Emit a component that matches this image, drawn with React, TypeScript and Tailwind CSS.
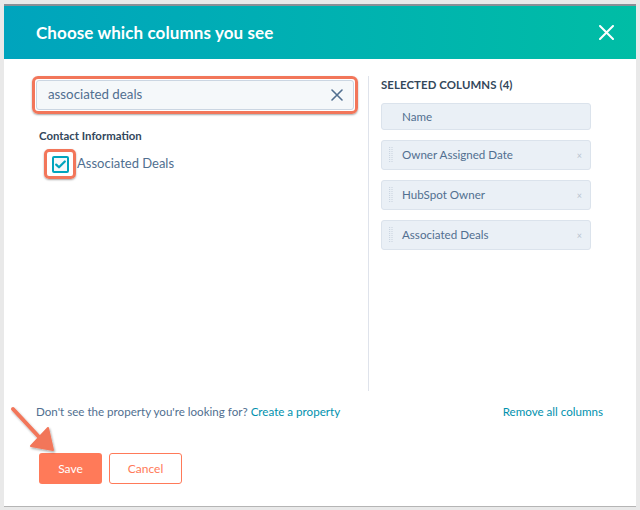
import React from 'react';

const columns = [
  { name: 'Name', locked: true },
  { name: 'Owner Assigned Date', locked: false },
  { name: 'HubSpot Owner', locked: false },
  { name: 'Associated Deals', locked: false },
];

const DragHandle: React.FC = () => (
  <svg width="4" height="18" viewBox="0 0 4 18" className="shrink-0">
    {[0, 1, 2, 3, 4, 5, 6, 7].map((i) => (
      <g key={i}>
        <rect x="0" y={1 + i * 2} width="1.2" height="1" fill="#cbd6e2" />
        <rect x="2.4" y={1 + i * 2} width="1.2" height="1" fill="#cbd6e2" />
      </g>
    ))}
  </svg>
);

const App: React.FC = () => {
  return (
    <div
      className="relative w-[640px] h-[510px] bg-[#e9e9e9] px-[4px] pt-[4px] pb-[3px]"
      style={{ fontFamily: 'Lato, "Open Sans", sans-serif' }}
    >
      <div className="flex flex-col h-full bg-white border-t-2 border-[#8a8f96] border-b border-b-[#b5b5b5]">
        {/* Header */}
        <div className="flex items-center justify-between h-[53px] pl-[32px] pr-[22px] bg-gradient-to-r from-[#00a4bd] to-[#00bda5]">
          <h1 className="text-white text-[17px] font-bold tracking-[0.1px]">Choose which columns you see</h1>
          <svg width="15" height="15" viewBox="0 0 15 15">
            <path d="M1 1 L14 14 M14 1 L1 14" stroke="#ffffff" strokeWidth="2" strokeLinecap="round" />
          </svg>
        </div>

        {/* Body */}
        <div className="flex flex-1 pt-[17px]">
          {/* Left column */}
          <div className="w-[364px] pl-[28px] pr-[10px]">
            <div className="w-[326px] rounded-[6px] border-[3px] border-[#f2765a] p-[1px] shadow-[0_1px_2px_rgba(0,0,0,0.35)]">
              <div className="flex items-center justify-between h-[30px] rounded-[3px] border border-[#cbd6e2] bg-[#f5f8fa] pl-[11px] pr-[10px]">
                <span className="text-[13.3px] text-[#516f90]">associated deals</span>
                <svg width="12" height="12" viewBox="0 0 12 12">
                  <path d="M1 1 L11 11 M11 1 L1 11" stroke="#516f90" strokeWidth="1.6" strokeLinecap="round" />
                </svg>
              </div>
            </div>
            <div className="pl-[7px] mt-[13px] text-[11.4px] font-bold text-[#33475b]">Contact Information</div>
            <div className="flex items-center mt-[5px] pl-[12px]">
              <div className="flex items-center justify-center w-[32px] h-[30px] rounded-[5px] border-[3px] border-[#f2765a] shadow-[0_1px_2px_rgba(0,0,0,0.35)]">
                <div className="flex items-center justify-center w-[17px] h-[17px] rounded-[2px] border-2 border-[#00a4bd] bg-[#f5f8fa]">
                  <svg width="11" height="9" viewBox="0 0 11 9">
                    <path d="M1.2 4.6 L4 7.3 L9.8 1.5" stroke="#00a4bd" strokeWidth="2.2" fill="none" strokeLinecap="round" strokeLinejoin="round" />
                  </svg>
                </div>
              </div>
              <span className="ml-[1px] text-[13px] text-[#516f90]">Associated Deals</span>
            </div>
          </div>

          {/* Divider */}
          <div className="w-px bg-[#dfe3eb] mb-[2px]" />

          {/* Right column */}
          <div className="pl-[12px]">
            <div className="text-[11.4px] font-bold text-[#33475b] uppercase tracking-[0.1px]">Selected Columns (4)</div>
            <div className="flex flex-col gap-[10px] mt-[10px]">
              {columns.map((col) => (
                <div
                  key={col.name}
                  className={`flex items-center w-[210px] ${col.locked ? 'h-[27px]' : 'h-[30px]'} rounded-[3px] border border-[#dbe3ec] bg-[#eaf0f6] pl-[7px] pr-[8px]`}
                >
                  <div className="w-[4px]">{!col.locked && <DragHandle />}</div>
                  <span className="ml-[9px] flex-1 text-[11.6px] text-[#516f90]">{col.name}</span>
                  {!col.locked && <span className="text-[9px] text-[#b7c3d0] leading-none">×</span>}
                </div>
              ))}
            </div>
          </div>
        </div>

        {/* Footer */}
        <div className="flex items-center justify-between mt-[6px] pl-[32px] pr-[33px] h-[26px] text-[11.6px]">
          <span className="text-[#516f90]">
            Don't see the property you're looking for? <span className="text-[#0091ae]">Create a property</span>
          </span>
          <span className="text-[#0091ae]">Remove all columns</span>
        </div>
        <div className="flex gap-[7px] pl-[35px] pt-[28px] pb-[22px]">
          <button className="w-[63px] h-[31px] rounded-[3px] bg-[#ff7a59] text-white text-[12px]">Save</button>
          <button className="w-[73px] h-[31px] rounded-[3px] border border-[#ff7a59] bg-white text-[#ff7a59] text-[12px]">
            Cancel
          </button>
        </div>
      </div>

      {/* Annotation arrow */}
      <svg className="absolute left-0 top-0 pointer-events-none" width="640" height="510" viewBox="0 0 640 510">
        <defs>
          <filter id="sh" x="-20%" y="-20%" width="140%" height="140%">
            <feDropShadow dx="1" dy="1.5" stdDeviation="1.2" floodColor="#000" floodOpacity="0.35" />
          </filter>
        </defs>
        <g filter="url(#sh)">
          <path d="M13 409 L40 438" stroke="#f2765a" strokeWidth="4" strokeLinecap="round" />
          <path d="M31 446 L53 450 L48 428 Z" fill="#f2765a" stroke="#f2765a" strokeWidth="2" strokeLinejoin="round" />
        </g>
      </svg>
    </div>
  );
};

export default App;
